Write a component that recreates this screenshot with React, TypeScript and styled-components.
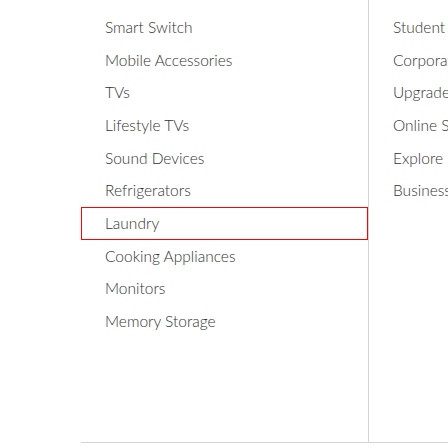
import React from "react";
import styled, { createGlobalStyle } from "styled-components";

const Global = createGlobalStyle`
  html, body { margin: 0; padding: 0; background: #fff; }
  body { width: 448px; height: 448px; overflow: hidden; }
`;

const Menu = styled.nav`
  display: flex;
  margin-left: 81px;
  height: 443px;
  box-sizing: border-box;
  border-bottom: 1px solid #d4d4d4;
  width: 600px;
  font-family: Lato, "Liberation Sans", Arial, sans-serif;
`;

const Column = styled.ul<{ $width?: number; $divider?: boolean }>`
  list-style: none;
  margin: 0;
  padding: 11px 0 0;
  box-sizing: border-box;
  flex: 0 0 ${(p) => (p.$width ? `${p.$width}px` : "auto")};
  border-right: ${(p) => (p.$divider ? "1px solid #d4d4d4" : "none")};
`;

const Item = styled.li<{ $focused?: boolean }>`
  padding: 8px 24px;
  font-size: 15.5px;
  font-weight: 300;
  line-height: 16.67px;
  color: #333;
  white-space: nowrap;
  outline: ${(p) => (p.$focused ? "1px solid #ff0000" : "none")};
  outline-offset: -1px;
`;

const left = [
  "Smart Switch",
  "Mobile Accessories",
  "TVs",
  "Lifestyle TVs",
  "Sound Devices",
  "Refrigerators",
  "Laundry",
  "Cooking Appliances",
  "Monitors",
  "Memory Storage",
];

const right = [
  "Student Offers",
  "Corporate Employee Offers",
  "Upgrade Program",
  "Online Shop Offers",
  "Explore",
  "Business",
];

export default function App() {
  return (
    <>
      <Global />
      <Menu>
        <Column $width={288} $divider>
          {left.map((t) => (
            <Item key={t} $focused={t === "Laundry"}>
              {t}
            </Item>
          ))}
        </Column>
        <Column>
          {right.map((t) => (
            <Item key={t}>{t}</Item>
          ))}
        </Column>
      </Menu>
    </>
  );
}
